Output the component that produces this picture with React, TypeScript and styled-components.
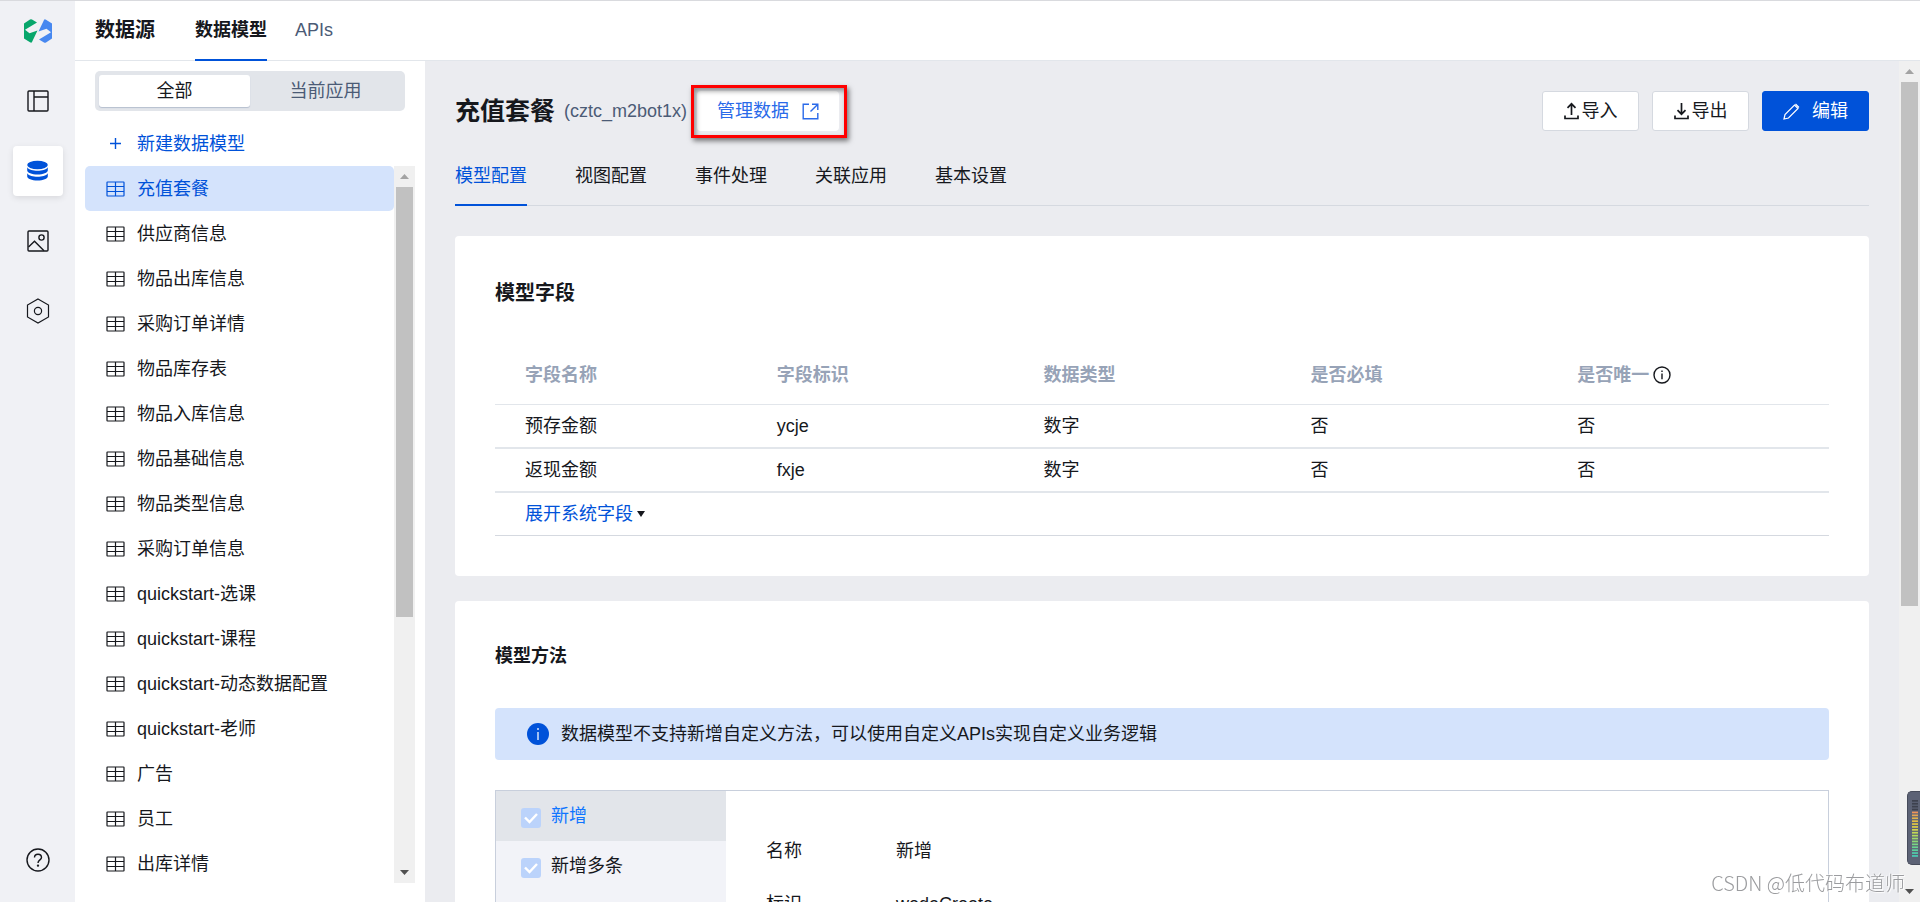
import React from 'react';
import styled, { createGlobalStyle, css } from 'styled-components';

const color = {
  blue: '#0052d9',
  text: '#16181d',
  muted: '#4b5b76',
  label: '#97a3b7',
  rail: '#f0f1f5',
  page: '#ebecf0',
  line: '#d5d9e0',
  softLine: '#e2e6eb',
  selected: '#d4e3fc',
};

const GlobalStyle = createGlobalStyle`
  *, *::before, *::after { box-sizing: border-box; }
  body {
    margin: 0;
    overflow: hidden;
    color: ${color.text};
    font-family: "Liberation Sans", "Noto Sans CJK SC", sans-serif;
    font-size: 18px;
    line-height: 24px;
  }
  button, input { font: inherit; color: inherit; margin: 0; }
  button { border: 0; padding: 0; background: none; cursor: pointer; }
  a { color: inherit; text-decoration: none; }
  ul, h1, h2, dl, dd { margin: 0; padding: 0; list-style: none; }
  svg { display: block; flex: none; }
`;

/* ---------- shell ---------- */

const Shell = styled.div`
  display: flex;
  height: 100vh;
  border-top: 1px solid #d9dade;
  background: #fff;
`;

const Rail = styled.nav`
  flex: none;
  width: 75px;
  padding: 18px 0 17px;
  display: flex;
  flex-direction: column;
  align-items: center;
  background: ${color.rail};
`;

const Logo = styled.a`
  display: block;
  margin-bottom: 33px;
`;

const RailList = styled.ul`
  flex: 1;
  display: flex;
  flex-direction: column;
  gap: 20px;
`;

const RailLink = styled.a<{ $active?: boolean }>`
  width: 50px;
  height: 50px;
  display: flex;
  align-items: center;
  justify-content: center;
  border-radius: 4px;
  ${(p) =>
    p.$active &&
    css`
      color: ${color.blue};
      background: #fff;
      box-shadow: 0 2px 6px rgba(0, 0, 0, 0.1);
    `}
`;

const Workspace = styled.div`
  flex: 1;
  min-width: 0;
  display: flex;
  flex-direction: column;
`;

const TopBar = styled.header`
  flex: none;
  height: 60px;
  padding-left: 20px;
  display: flex;
  align-items: stretch;
  border-bottom: 1px solid ${color.softLine};
`;

const TopTitle = styled.h1`
  margin-right: 40px;
  font-size: 20px;
  line-height: 58px;
  font-weight: 700;
`;

const TopTab = styled.a<{ $active?: boolean }>`
  height: 60px;
  margin-right: 28px;
  line-height: 58px;
  color: ${(p) => (p.$active ? color.text : color.muted)};
  font-weight: ${(p) => (p.$active ? 700 : 400)};
  border-bottom: 2px solid ${(p) => (p.$active ? color.blue : 'transparent')};
`;

const Body = styled.div`
  flex: 1;
  min-height: 0;
  display: flex;
`;

/* ---------- model list ---------- */

const Sidebar = styled.aside`
  flex: none;
  width: 350px;
  padding: 10px 10px 19px;
  display: flex;
  flex-direction: column;
`;

const Segmented = styled.div`
  flex: none;
  height: 40px;
  margin: 0 10px;
  padding: 4px;
  display: flex;
  border-radius: 5px;
  background: #e2e5ea;
`;

const Segment = styled.button<{ $active?: boolean }>`
  flex: 1;
  border-radius: 3px;
  line-height: 30px;
  color: ${(p) => (p.$active ? color.text : color.muted)};
  ${(p) =>
    p.$active &&
    css`
      background: #fff;
      box-shadow: 0 1px 1px #b6bfcf;
    `}
`;

const NewModel = styled.button`
  flex: none;
  height: 45px;
  margin-top: 10px;
  padding-left: 24px;
  display: flex;
  align-items: center;
  gap: 15px;
  color: ${color.blue};
`;

const ListFrame = styled.div`
  flex: 1;
  min-height: 0;
  display: flex;
`;

const ModelList = styled.ul`
  flex: 1;
  overflow: hidden;
`;

const ModelLink = styled.a<{ $active?: boolean }>`
  height: 45px;
  padding-left: 21px;
  display: flex;
  align-items: center;
  gap: 12px;
  border-radius: 5px;
  color: ${(p) => (p.$active ? color.blue : color.text)};
  background: ${(p) => (p.$active ? color.selected : 'none')};
`;

/* ---------- scroll bars ---------- */

const Track = styled.div`
  flex: none;
  width: 21px;
  padding: 0 2px;
  display: flex;
  flex-direction: column;
  background: #f0f0f0;
`;

const TrackEnd = styled.span<{ $down?: boolean }>`
  flex: none;
  height: 21px;
  display: flex;
  align-items: center;
  justify-content: center;
  color: ${(p) => (p.$down ? '#505050' : '#a3a3a3')};
`;

const Thumb = styled.span<{ $share: number }>`
  flex: ${(p) => p.$share} 0 0;
  background: #c1c1c1;
`;

const TrackRest = styled.span<{ $share: number }>`
  flex: ${(p) => p.$share} 0 0;
`;

/* ---------- main column ---------- */

const Main = styled.main`
  flex: 1;
  min-width: 0;
  padding: 30px 30px 0;
  overflow: hidden;
  background: ${color.page};
`;

const TitleRow = styled.div`
  display: flex;
  align-items: center;
  height: 40px;
`;

const ModelName = styled.h2`
  font-size: 25px;
  line-height: 40px;
  font-weight: 700;
`;

const ModelId = styled.span`
  margin: 0 10px 0 9px;
  color: ${color.muted};
`;

const Marked = styled.span`
  position: relative;
  &::after {
    content: '';
    position: absolute;
    inset: -6px -8px -7px -6px;
    border: 3px solid #f00;
    box-shadow: 2px 3px 5px rgba(0, 0, 0, 0.5), inset 2px 3px 5px rgba(0, 0, 0, 0.4);
    pointer-events: none;
  }
`;

const ManageLink = styled.a`
  height: 40px;
  padding: 0 20px;
  display: flex;
  align-items: center;
  gap: 13px;
  border-radius: 4px;
  color: #2a6ae9;
  background: #fff;
`;

const Actions = styled.div`
  margin-left: auto;
  display: flex;
  gap: 13px;
`;

const ActionButton = styled.button<{ $primary?: boolean }>`
  width: ${(p) => (p.$primary ? 107 : 97)}px;
  height: 40px;
  display: flex;
  align-items: center;
  justify-content: center;
  gap: ${(p) => (p.$primary ? 12 : 3)}px;
  border-radius: 3px;
  border: 1px solid ${(p) => (p.$primary ? color.blue : color.line)};
  color: ${(p) => (p.$primary ? '#fff' : color.text)};
  background: ${(p) => (p.$primary ? color.blue : '#fff')};
`;

const Tabs = styled.div`
  margin: 15px 0 30px;
  display: flex;
  gap: 48px;
  box-shadow: inset 0 -1px 0 ${color.line};
`;

const Tab = styled.button<{ $active?: boolean }>`
  height: 60px;
  padding-top: 2px;
  border-bottom: 2px solid ${(p) => (p.$active ? color.blue : 'transparent')};
  color: ${(p) => (p.$active ? color.blue : color.text)};
`;

const Card = styled.section`
  margin-bottom: 25px;
  padding: 40px;
  border-radius: 4px;
  background: #fff;
`;

const CardTitle = styled.h2<{ $small?: boolean }>`
  margin-bottom: 38px;
  padding-top: 2px;
  font-size: ${(p) => (p.$small ? 18 : 20)}px;
  line-height: ${(p) => (p.$small ? 27 : 30)}px;
  font-weight: 700;
`;

const FieldTable = styled.table`
  width: 100%;
  table-layout: fixed;
  border-collapse: separate;
  border-spacing: 0;
`;

const Th = styled.th`
  height: 59px;
  padding: 0 0 0 15px;
  text-align: left;
  color: ${color.label};
  border-bottom: 1px solid ${color.softLine};
  &:first-child { padding-left: 30px; }
`;

const ThLabel = styled.span`
  display: flex;
  align-items: center;
  gap: 4px;
`;

const Td = styled.td`
  height: 44px;
  padding: 0 0 0 15px;
  border-bottom: 2px solid ${color.softLine};
  &:first-child { padding-left: 30px; }
`;

const ExpandCell = styled(Td)`
  height: 43px;
  border-bottom: 1px solid ${color.line};
`;

const ExpandButton = styled.button`
  display: flex;
  align-items: center;
  gap: 4px;
  color: ${color.blue};
`;

const Notice = styled.div`
  height: 52px;
  margin-bottom: 30px;
  padding-left: 32px;
  display: flex;
  align-items: center;
  gap: 12px;
  border-radius: 4px;
  background: ${color.selected};
`;

const MethodPanel = styled.div`
  display: flex;
  min-height: 300px;
  border: 1px solid #c8cfdc;
`;

const MethodList = styled.ul`
  flex: none;
  width: 230px;
  background: #f2f3f8;
`;

const MethodItem = styled.li<{ $active?: boolean }>`
  height: 50px;
  padding-left: 25px;
  display: flex;
  align-items: center;
  color: ${(p) => (p.$active ? '#0f75ff' : color.text)};
  background: ${(p) => (p.$active ? '#e2e5ea' : 'none')};
`;

const MethodLabel = styled.label`
  display: flex;
  align-items: center;
  gap: 10px;
`;

const CheckSlot = styled.span`
  position: relative;
  width: 20px;
  height: 20px;
  margin-top: 4px;
`;

const Check = styled.input`
  appearance: none;
  display: block;
  width: 20px;
  height: 20px;
  border-radius: 3px;
  background: #bbd3fb;
`;

const CheckMark = styled.svg`
  position: absolute;
  inset: 0;
  pointer-events: none;
`;

const Details = styled.dl`
  flex: 1;
  padding: 33px 40px;
  display: grid;
  grid-template-columns: 130px 1fr;
  grid-auto-rows: 53px;
  align-content: start;
  align-items: center;
`;

/* ---------- overlays ---------- */

const Watermark = styled.div`
  position: fixed;
  right: 15px;
  bottom: 6px;
  font-family: "Noto Sans CJK SC", sans-serif;
  font-size: 20px;
  line-height: 26px;
  font-weight: 300;
  color: #9b9c9f;
  text-shadow: 1px 1px 1px #fff, -1px -1px 0 rgba(255, 255, 255, 0.6);
  pointer-events: none;
`;

const Meter = styled.div`
  position: fixed;
  right: 0;
  bottom: 37px;
  width: 13px;
  height: 74px;
  padding: 8px 2px 8px 4px;
  border: 1px solid #464b5a;
  border-right: 0;
  border-radius: 5px 0 0 5px;
  background: #5c6275;
`;

/* ---------- icons ---------- */

const LogoIcon = () => (
  <svg width="28" height="24" viewBox="0 0 28 24">
    <path d="M0 4.500 6 .6Q7 0 8 .6L13 3.500 1 10.800 5.500 14.300 13.500 11.500 8 23Q7.400 24.200 6 23.200L0 19.500z" fill="#07a66b" />
    <path d="M28 19.500 22 23.400Q21 24 20 23.400L15 20.500 27 13.200 22.500 9.700 14.500 12.500 20 1Q20.600-.2 22 .8L28 4.500z" fill="#4788f0" />
  </svg>
);

const LayoutIcon = () => (
  <svg width="22" height="22" viewBox="0 0 22 22" fill="none" stroke="currentColor" strokeWidth="1.400">
    <rect x="1" y="1" width="20" height="20" rx="1" />
    <path d="M7 1v20M7 7h14" />
  </svg>
);

const DatabaseIcon = () => (
  <svg width="22" height="22" viewBox="0 0 22 22" fill="currentColor">
    <ellipse cx="10.500" cy="5" rx="10.300" ry="4.200" />
    <path d="M.2 7.200C2 9.800 6 10.700 10.500 10.700S19 9.800 20.800 7.200v3.200c0 2.200-4.600 4-10.300 4S.2 12.600.2 10.400z" />
    <path d="M.2 13.200c1.800 2.600 5.800 3.500 10.300 3.500s8.500-.9 10.300-3.500v3.400c0 2.200-4.600 4-10.300 4s-10.300-1.800-10.300-4z" />
  </svg>
);

const ImageIcon = () => (
  <svg width="22" height="22" viewBox="0 0 22 22" fill="none" stroke="currentColor" strokeWidth="1.400">
    <rect x="1" y="1" width="20" height="20" rx="1" />
    <circle cx="14.500" cy="7.500" r="2.600" />
    <path d="M1.500 17 7.500 11.200 17 20.800" />
  </svg>
);

const HexIcon = () => (
  <svg width="24" height="26" viewBox="0 0 24 26" fill="none" stroke="currentColor" strokeWidth="1.200">
    <path d="M12 1 22.500 7v12L12 25 1.500 19V7z" />
    <circle cx="12" cy="13" r="3.600" />
  </svg>
);

const HelpIcon = () => (
  <svg width="24" height="24" viewBox="0 0 24 24" fill="none" stroke="currentColor" strokeWidth="1.400">
    <circle cx="12" cy="12" r="11" />
    <path d="M8.500 9.500c0-2 1.500-3.300 3.500-3.300s3.500 1.300 3.500 3.200c0 2.300-3.500 2.700-3.500 5.600" />
    <circle cx="12" cy="17.600" r=".5" fill="currentColor" />
  </svg>
);

const TableIcon = () => (
  <svg width="19" height="16" viewBox="0 0 19 16" fill="none" stroke="currentColor" strokeWidth="1.200">
    <rect x="1" y="1" width="17" height="14" rx=".5" />
    <path d="M1 5.500h17M1 10.500h17M9.500 1v14" />
  </svg>
);

const PlusIcon = () => (
  <svg width="13" height="13" viewBox="0 0 13 13" stroke="currentColor" strokeWidth="1.400">
    <path d="M6.500 1v11M1 6.500h11" />
  </svg>
);

const ExternalIcon = () => (
  <svg width="17" height="17" viewBox="0 0 17 17" fill="none" stroke="currentColor" strokeWidth="1.400">
    <path d="M7 1.200H1.200v14.600h14.600V10M10 1.200h5.800V7M15.600 1.400 8.500 8.500" />
  </svg>
);

const ArrowTrayIcon = ({ down }: { down?: boolean }) => (
  <svg width="15" height="18" viewBox="0 0 15 18" fill="none" stroke="currentColor" strokeWidth="1.700">
    <path d="M1 13.500v3h13v-3" />
    <path d={down ? 'M7.500 1v11M3.500 8.200l4 4 4-4' : 'M7.500 13V2M3.500 5.800l4-4 4 4'} />
  </svg>
);

const PencilIcon = () => (
  <svg width="17" height="17" viewBox="0 0 17 17" fill="none" stroke="currentColor" strokeWidth="1.200">
    <path d="M1 16l1-4.500L11.500 2l3.500 3.500L5.500 15zM12.500 1l3.500 3.500" />
  </svg>
);

const InfoOutlineIcon = () => (
  <svg width="18" height="18" viewBox="0 0 18 18" fill="none" stroke={color.text} strokeWidth="1.400">
    <circle cx="9" cy="9" r="8" />
    <path d="M9 7.500v5.800M9 4.500v1.400" />
  </svg>
);

const InfoSolidIcon = () => (
  <svg width="22" height="22" viewBox="0 0 22 22">
    <circle cx="11" cy="11" r="11" fill={color.blue} />
    <path d="M11 9v8M11 5v2" stroke="#d4e3fc" strokeWidth="1.500" />
  </svg>
);

const Caret = () => (
  <svg width="8" height="6" viewBox="0 0 8 6">
    <path d="M0 0h8L4 6z" fill={color.text} />
  </svg>
);

const TrackArrow = ({ down }: { down?: boolean }) => (
  <svg width="9" height="5" viewBox="0 0 9 5" fill="currentColor">
    <path d={down ? 'M0 0h9L4.500 5z' : 'M0 5h9L4.500 0z'} />
  </svg>
);

const ScrollBar = ({ thumb, rest }: { thumb: number; rest: number }) => (
  <Track aria-hidden="true">
    <TrackEnd><TrackArrow /></TrackEnd>
    <Thumb $share={thumb} />
    <TrackRest $share={rest} />
    <TrackEnd $down><TrackArrow down /></TrackEnd>
  </Track>
);

const meterColors = [
  '#3d414e', '#3d414e', '#3d414e', '#3d414e', '#f0945a', '#e8a654', '#e2b34c', '#e0bd46', '#e0c844', '#dccf48',
  '#d0d44e', '#c2d856', '#b1da5f', '#9fda6a', '#8cda76', '#7ad784', '#6ad490', '#5dd09b', '#52ccaa', '#4accb4',
];

const MeterIcon = () => (
  <svg width="6" height="58" viewBox="0 0 6 58">
    {meterColors.map((fill, i) => (
      <rect key={i} x="0" y={i * 2.9} width="6" height="1.700" fill={fill} />
    ))}
  </svg>
);

/* ---------- data ---------- */

const models = [
  '充值套餐', '供应商信息', '物品出库信息', '采购订单详情', '物品库存表', '物品入库信息', '物品基础信息',
  '物品类型信息', '采购订单信息', 'quickstart-选课', 'quickstart-课程', 'quickstart-动态数据配置',
  'quickstart-老师', '广告', '员工', '出库详情',
];

const tabs = ['模型配置', '视图配置', '事件处理', '关联应用', '基本设置'];

const fields = [
  ['预存金额', 'ycje', '数字', '否', '否'],
  ['返现金额', 'fxje', '数字', '否', '否'],
];

const methods = ['新增', '新增多条'];

export default function App() {
  return (
    <>
      <GlobalStyle />
      <Shell>
        <Rail aria-label="主导航">
          <Logo href="#" aria-label="首页"><LogoIcon /></Logo>
          <RailList>
            <li><RailLink href="#" aria-label="应用"><LayoutIcon /></RailLink></li>
            <li><RailLink href="#" aria-label="数据源" $active><DatabaseIcon /></RailLink></li>
            <li><RailLink href="#" aria-label="素材"><ImageIcon /></RailLink></li>
            <li><RailLink href="#" aria-label="设置"><HexIcon /></RailLink></li>
          </RailList>
          <RailLink href="#" aria-label="帮助"><HelpIcon /></RailLink>
        </Rail>

        <Workspace>
          <TopBar>
            <TopTitle>数据源</TopTitle>
            <TopTab href="#" $active>数据模型</TopTab>
            <TopTab href="#">APIs</TopTab>
          </TopBar>

          <Body>
            <Sidebar>
              <Segmented>
                <Segment $active>全部</Segment>
                <Segment>当前应用</Segment>
              </Segmented>
              <NewModel><PlusIcon />新建数据模型</NewModel>
              <ListFrame>
                <ModelList>
                  {models.map((name, i) => (
                    <li key={name}>
                      <ModelLink href="#" $active={i === 0}><TableIcon />{name}</ModelLink>
                    </li>
                  ))}
                </ModelList>
                <ScrollBar thumb={430} rest={245} />
              </ListFrame>
            </Sidebar>

            <Main>
              <TitleRow>
                <ModelName>充值套餐</ModelName>
                <ModelId>(cztc_m2bot1x)</ModelId>
                <Marked>
                  <ManageLink href="#">管理数据<ExternalIcon /></ManageLink>
                </Marked>
                <Actions>
                  <ActionButton><ArrowTrayIcon />导入</ActionButton>
                  <ActionButton><ArrowTrayIcon down />导出</ActionButton>
                  <ActionButton $primary><PencilIcon />编辑</ActionButton>
                </Actions>
              </TitleRow>

              <Tabs>
                {tabs.map((name, i) => (
                  <Tab key={name} $active={i === 0}>{name}</Tab>
                ))}
              </Tabs>

              <Card>
                <CardTitle>模型字段</CardTitle>
                <FieldTable>
                  <thead>
                    <tr>
                      <Th>字段名称</Th>
                      <Th>字段标识</Th>
                      <Th>数据类型</Th>
                      <Th>是否必填</Th>
                      <Th><ThLabel>是否唯一<InfoOutlineIcon /></ThLabel></Th>
                    </tr>
                  </thead>
                  <tbody>
                    {fields.map((row) => (
                      <tr key={row[1]}>
                        {row.map((cell, i) => <Td key={i}>{cell}</Td>)}
                      </tr>
                    ))}
                    <tr>
                      <ExpandCell colSpan={5}>
                        <ExpandButton>展开系统字段<Caret /></ExpandButton>
                      </ExpandCell>
                    </tr>
                  </tbody>
                </FieldTable>
              </Card>

              <Card>
                <CardTitle $small>模型方法</CardTitle>
                <Notice>
                  <InfoSolidIcon />
                  数据模型不支持新增自定义方法，可以使用自定义APIs实现自定义业务逻辑
                </Notice>
                <MethodPanel>
                  <MethodList>
                    {methods.map((name, i) => (
                      <MethodItem key={name} $active={i === 0}>
                        <MethodLabel>
                          <CheckSlot>
                            <Check type="checkbox" defaultChecked disabled />
                            <CheckMark width="20" height="20" viewBox="0 0 20 20" fill="none" stroke="#fff" strokeWidth="2.400">
                              <path d="M4 9.500 8.500 14 16 6" />
                            </CheckMark>
                          </CheckSlot>
                          {name}
                        </MethodLabel>
                      </MethodItem>
                    ))}
                  </MethodList>
                  <Details>
                    <dt>名称</dt>
                    <dd>新增</dd>
                    <dt>标识</dt>
                    <dd>wedaCreate</dd>
                  </Details>
                </MethodPanel>
              </Card>
            </Main>
            <ScrollBar thumb={524} rest={275} />
          </Body>
        </Workspace>
      </Shell>
      <Meter aria-hidden="true"><MeterIcon /></Meter>
      <Watermark>CSDN @低代码布道师</Watermark>
    </>
  );
}
